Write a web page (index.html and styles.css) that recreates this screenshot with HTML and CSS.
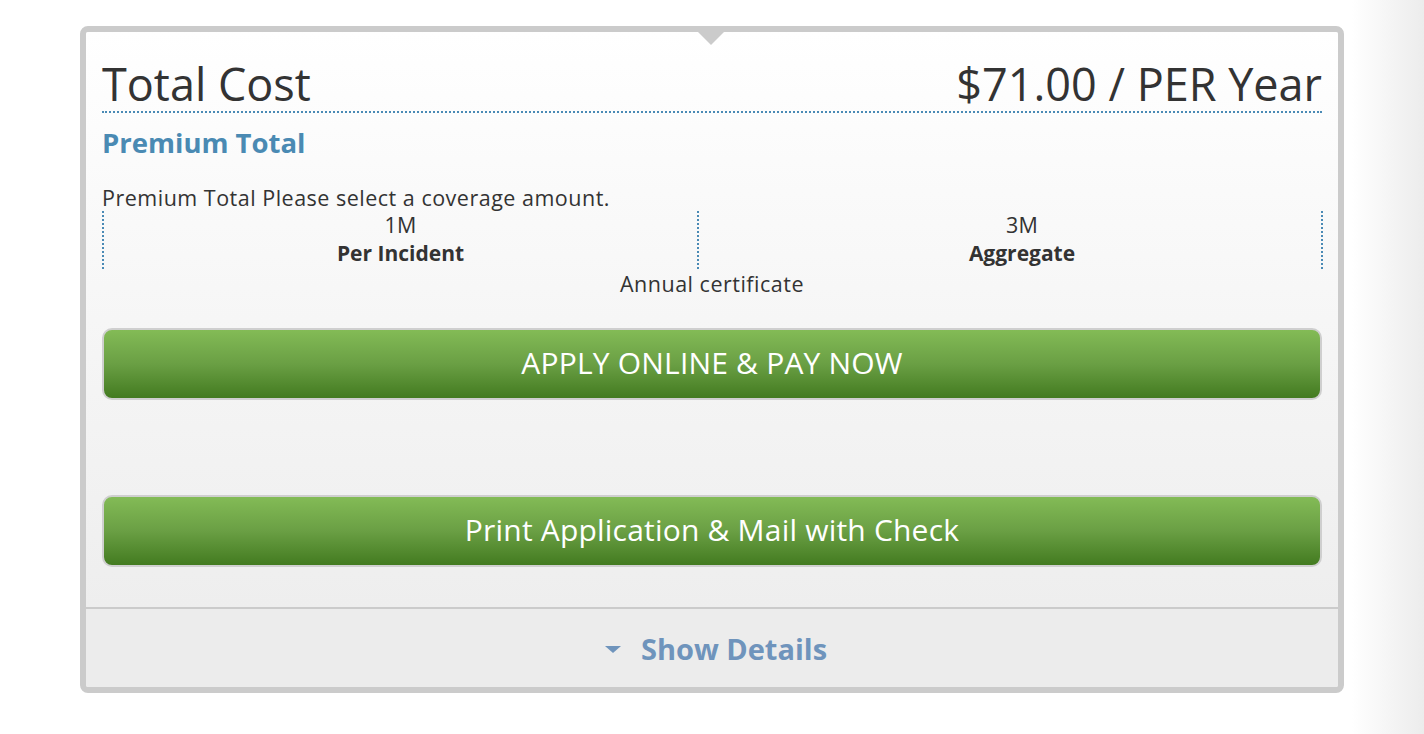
FILE: index.html
```html
<!DOCTYPE html>
<html>
<head>
<meta charset="utf-8">
<link rel="stylesheet" href="styles.css">
</head>
<body>
<div class="page">
  <div class="card">
    <span class="caret"></span>
    <div class="body">
      <div class="header">
        <h1 class="title">Total Cost</h1>
        <div class="price">$71.00 / PER Year</div>
      </div>
      <h2 class="subtitle">Premium Total</h2>
      <p class="note">Premium Total Please select a coverage amount.</p>
      <div class="limits">
        <div class="limit">
          <div class="amount">1M</div>
          <div class="label">Per Incident</div>
        </div>
        <div class="limit limit-second">
          <div class="amount">3M</div>
          <div class="label">Aggregate</div>
        </div>
      </div>
      <div class="term">Annual certificate</div>
      <a class="btn btn-upper" href="#">APPLY ONLINE &amp; PAY NOW</a>
      <a class="btn btn-second" href="#">Print Application &amp; Mail with Check</a>
    </div>
    <div class="footer">
      <span class="tri"></span>
      <span class="details">Show Details</span>
    </div>
  </div>
</div>
</body>
</html>
```

FILE: styles.css
```css
html, body {
  margin: 0;
  padding: 0;
}
body {
  background: linear-gradient(to right, #ffffff 0, #ffffff 1352px, #ececec 1424px);
  font-family: "Open Sans", "Lato", sans-serif;
  color: #333333;
  height: 734px;
  overflow: hidden;
}
.page {
  padding: 26px 0 0 80px;
}
.card {
  position: relative;
  width: 1252px;
  height: 655px;
  border: 6px solid #cbcbcb;
  border-radius: 8px;
  display: flex;
  flex-direction: column;
  overflow: hidden;
  background: #ececec;
}
.caret {
  position: absolute;
  left: 612px;
  top: 0;
  width: 0;
  height: 0;
  border-left: 13px solid transparent;
  border-right: 13px solid transparent;
  border-top: 13px solid #cbcbcb;
}
.body {
  flex: 1;
  padding: 0 16px;
  background: linear-gradient(#ffffff 0%, #f6f6f6 50%, #eeeeee 100%);
  display: flex;
  flex-direction: column;
}
.header {
  display: flex;
  justify-content: space-between;
  align-items: flex-end;
  height: 79px;
  border-bottom: 2px dotted #4a8ab5;
}
.title, .price {
  margin: 0 0 2px 0;
  font-size: 45px;
  font-weight: 400;
  line-height: 50px;
  color: #333333;
}
.subtitle {
  margin: 12px 0 0 0;
  font-size: 27.5px;
  line-height: 36px;
  font-weight: 700;
  color: #4a8ab3;
}
.note {
  margin: 25px 0 0 0;
  font-size: 21.5px;
  letter-spacing: 0.5px;
  line-height: 24px;
}
.limits {
  display: grid;
  grid-template-columns: 595px 1fr;
  border-right: 2px dotted #4a8ab5;
  margin-right: -1px;
  margin-top: 1px;
}
.limit {
  border-left: 2px dotted #4a8ab5;
  text-align: center;
  font-size: 21px;
  line-height: 28px;
  padding: 0 0 2px 0;
}
.amount {
  font-size: 21.5px;
  letter-spacing: 0.3px;
}
.limit-second {
  padding-left: 24px;
}
.label {
  font-weight: 700;
}
.term {
  text-align: center;
  font-size: 21.5px;
  letter-spacing: 0.5px;
  line-height: 28px;
  margin-top: 1px;
}
.btn {
  display: flex;
  align-items: center;
  justify-content: center;
  height: 65px;
  padding-bottom: 3px;
  border: 2px solid #cfcfcf;
  border-radius: 10px;
  background: linear-gradient(#83bb56, #6a9f44 50%, #437b20);
  color: #ffffff;
  font-size: 30px;
  letter-spacing: 0.2px;
  text-decoration: none;
}
.btn-upper {
  margin-top: 30px;
}
.btn-second {
  margin-top: 95px;
}
.footer {
  height: 78px;
  border-top: 2px solid #cbcbcb;
  background: #ececec;
  display: flex;
  align-items: center;
  justify-content: center;
  gap: 20px;
  padding-left: 8px;
}
.tri {
  width: 0;
  height: 0;
  border-left: 8px solid transparent;
  border-right: 8px solid transparent;
  border-top: 7px solid #6f94bc;
  margin-top: 2px;
}
.details {
  font-size: 29px;
  font-weight: 700;
  color: #6f94bc;
}
```
